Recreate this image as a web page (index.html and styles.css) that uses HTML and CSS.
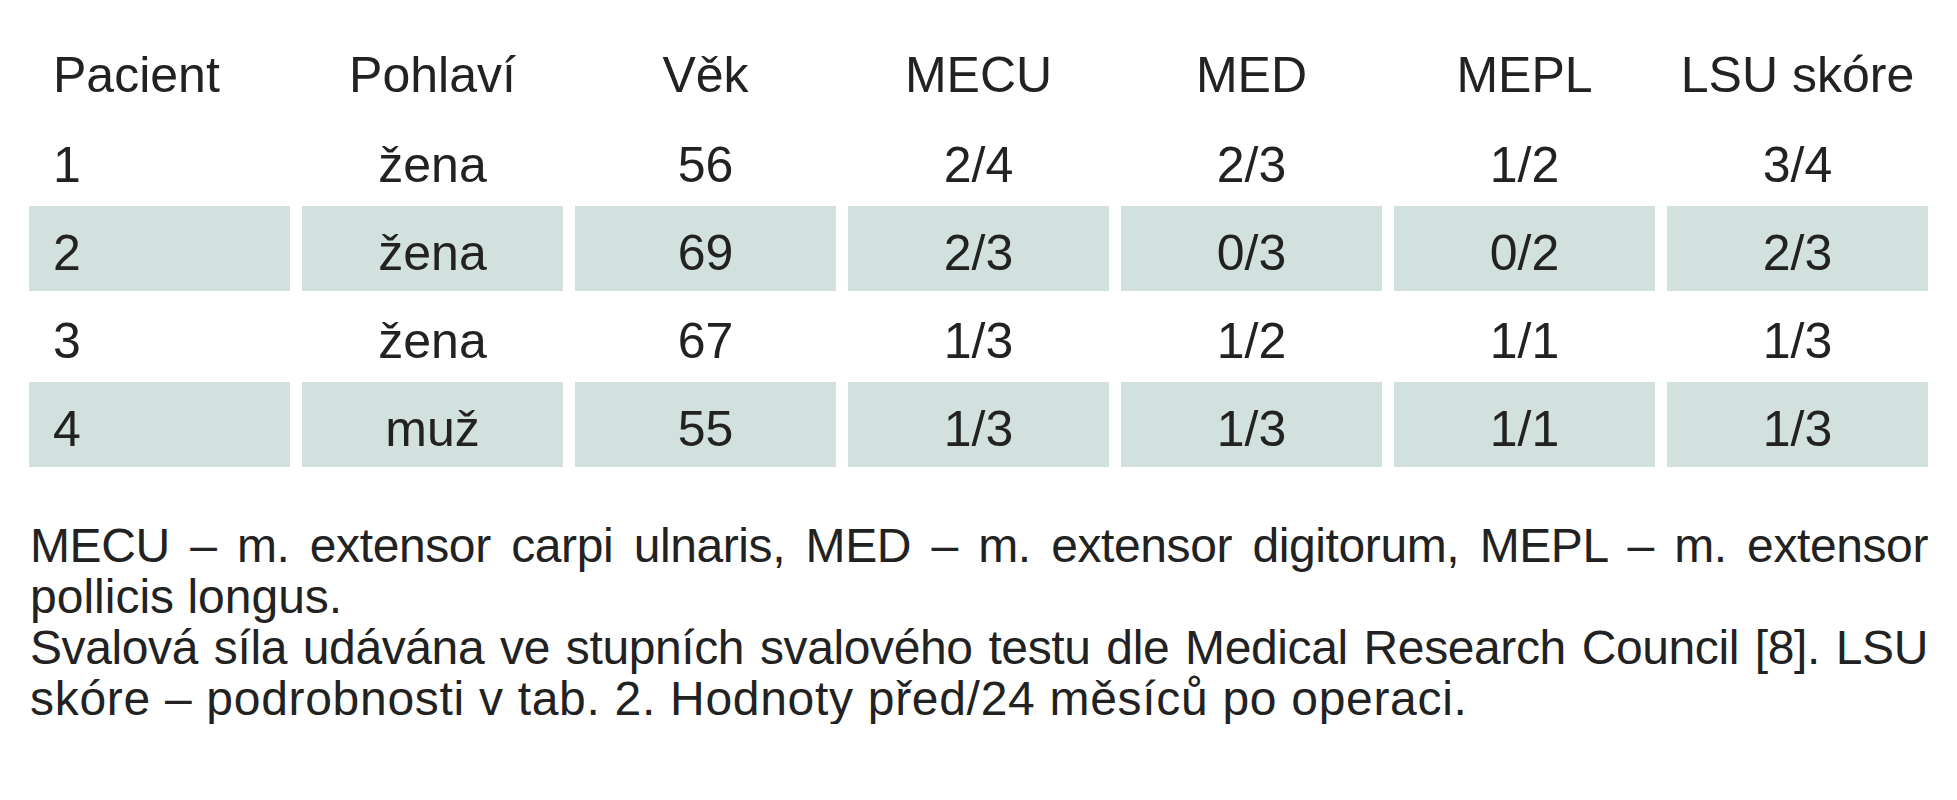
FILE: index.html
```html
<!DOCTYPE html>
<html lang="cs">
<head>
<meta charset="utf-8">
<title>Tabulka</title>
<link rel="stylesheet" href="styles.css">
</head>
<body>
<div class="page">
  <table class="data">
    <thead>
      <tr>
        <th class="first">Pacient</th>
        <th>Pohlaví</th>
        <th>Věk</th>
        <th>MECU</th>
        <th>MED</th>
        <th>MEPL</th>
        <th>LSU skóre</th>
      </tr>
    </thead>
    <tbody>
      <tr>
        <td class="first">1</td><td>žena</td><td>56</td><td>2/4</td><td>2/3</td><td>1/2</td><td>3/4</td>
      </tr>
      <tr class="shaded">
        <td class="first">2</td><td>žena</td><td>69</td><td>2/3</td><td>0/3</td><td>0/2</td><td>2/3</td>
      </tr>
      <tr>
        <td class="first">3</td><td>žena</td><td>67</td><td>1/3</td><td>1/2</td><td>1/1</td><td>1/3</td>
      </tr>
      <tr class="shaded">
        <td class="first">4</td><td>muž</td><td>55</td><td>1/3</td><td>1/3</td><td>1/1</td><td>1/3</td>
      </tr>
    </tbody>
  </table>
  <div class="notes">
    <p><span class="line full">MECU – m. extensor carpi ulnaris, MED – m. extensor digitorum, MEPL – m. extensor</span><span class="line">pollicis longus.</span></p>
    <p><span class="line full">Svalová síla udávána ve stupních svalového testu dle Medical Research Council [8]. LSU</span><span class="line last">skóre – podrobnosti v tab. 2. Hodnoty před/24 měsíců po operaci.</span></p>
  </div>
</div>
</body>
</html>
```
FILE: styles.css
```css
html, body {
  margin: 0;
  padding: 0;
  background: #ffffff;
}

body {
  font-family: "Liberation Sans", Arial, sans-serif;
  color: #222222;
}

.page {
  width: 1957px;
  padding-top: 27px;
}

.data {
  margin-left: 17px;
  width: 1923px;
  table-layout: fixed;
  border-collapse: separate;
  border-spacing: 12px 3px;
  font-size: 50px;
}

.data th,
.data td {
  height: 85px;
  padding: 0;
  font-weight: normal;
  text-align: center;
  vertical-align: middle;
  line-height: 56px;
  padding-top: 8px;
  box-sizing: border-box;
}

.data th {
  padding-top: 5px;
}

.data .first {
  text-align: left;
  padding-left: 24px;
}

.shaded td {
  background: #d3e1de;
}

.notes {
  margin: 50px 0 0 30px;
  width: 1898px;
  font-size: 48px;
  line-height: 51px;
}

.notes p {
  margin: 0;
}

.line {
  display: block;
  text-align: left;
}

.line.full {
  letter-spacing: -0.4px;
  text-align: justify;
  text-align-last: justify;
}

.line.last {
  letter-spacing: 0.7px;
}
```
